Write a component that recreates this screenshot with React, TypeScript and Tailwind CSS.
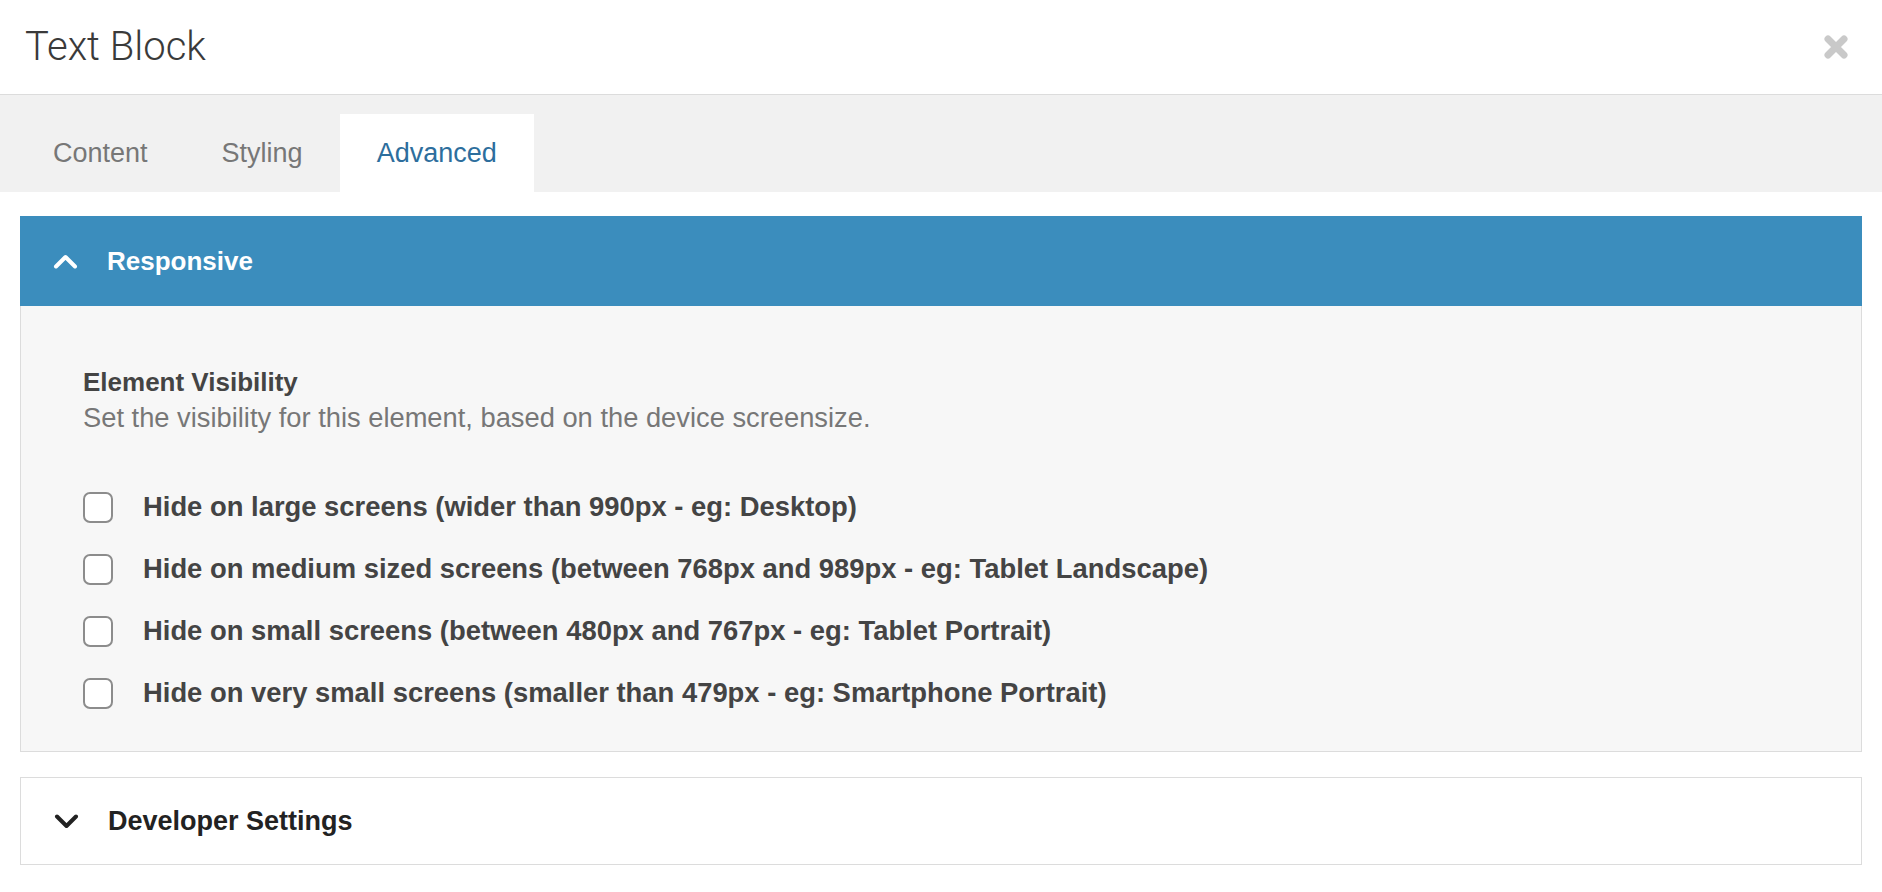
import { useState } from 'react'

const tabs = ['Content', 'Styling', 'Advanced']

const options = [
  'Hide on large screens (wider than 990px - eg: Desktop)',
  'Hide on medium sized screens (between 768px and 989px - eg: Tablet Landscape)',
  'Hide on small screens (between 480px and 767px - eg: Tablet Portrait)',
  'Hide on very small screens (smaller than 479px - eg: Smartphone Portrait)',
]

function Chevron({ up }: { up?: boolean }) {
  return (
    <svg width="25" height="15" viewBox="0 0 25 15" className="shrink-0">
      <polyline
        points={up ? '3,12.5 12.5,3 22,12.5' : '3,2.5 12.5,12 22,2.5'}
        fill="none"
        stroke="currentColor"
        strokeWidth="4"
        strokeLinecap="round"
        strokeLinejoin="round"
      />
    </svg>
  )
}

export default function App() {
  const [active, setActive] = useState('Advanced')
  const [checked, setChecked] = useState<boolean[]>([false, false, false, false])
  const [devOpen, setDevOpen] = useState(false)

  return (
    <div className="min-h-screen bg-white font-['Liberation_Sans',Arial,sans-serif]">
      <header className="h-[95px] flex items-center justify-between pl-[25px] pr-[33px] border-b border-[#dcdcdc]">
        <h1 className="font-['Roboto',sans-serif] font-light text-[40px] text-[#3a3a3a] leading-none">Text Block</h1>
        <button type="button" className="w-[26px] h-[26px] flex items-center justify-center">
          <svg width="26" height="26" viewBox="0 0 26 26">
            <path d="M5 5 L21 21 M21 5 L5 21" stroke="#c9c9c9" strokeWidth="7" strokeLinecap="round" />
          </svg>
        </button>
      </header>

      <nav className="h-[97px] bg-[#f1f1f1] flex items-end pl-[16px]">
        {tabs.map((t) => (
          <button
            key={t}
            type="button"
            onClick={() => setActive(t)}
            className={
              t === active
                ? 'h-[78px] px-[37px] bg-white text-[27px] text-[#2d6e9d]'
                : 'h-[78px] px-[37px] text-[27px] text-[#777]'
            }
          >
            {t}
          </button>
        ))}
      </nav>

      <main className="px-[20px] pt-[24px]">
        <section>
          <div className="h-[90px] bg-[#3b8dbd] flex items-center pl-[33px] gap-[29px] text-white">
            <Chevron up />
            <span className="text-[26px] font-bold">Responsive</span>
          </div>
          <div className="bg-[#f7f7f7] border border-t-0 border-[#dcdcdc] pl-[62px] pt-[58px] pb-[27px]">
            <h3 className="text-[26px] leading-[36px] font-bold text-[#444]">Element Visibility</h3>
            <p className="text-[27.3px] leading-[36px] text-[#777]">
              Set the visibility for this element, based on the device screensize.
            </p>
            <div className="mt-[40px] flex flex-col">
              {options.map((o, i) => (
                <label key={o} className="h-[62px] flex items-center gap-[30px] cursor-pointer">
                  <input
                    type="checkbox"
                    checked={checked[i]}
                    onChange={() => setChecked(checked.map((c, j) => (j === i ? !c : c)))}
                    className="appearance-none w-[30px] h-[31px] rounded-[7px] border-2 border-[#8c8c8c] bg-white checked:bg-[#3b8dbd] checked:border-[#3b8dbd] shrink-0"
                  />
                  <span className="text-[27.4px] font-bold text-[#444]">{o}</span>
                </label>
              ))}
            </div>
          </div>
        </section>

        <section className="mt-[25px] border border-[#dcdcdc] bg-white">
          <button
            type="button"
            onClick={() => setDevOpen(!devOpen)}
            className="h-[86px] w-full flex items-center pl-[33px] gap-[29px] text-[#222]"
          >
            <Chevron up={devOpen} />
            <span className="text-[27px] font-bold">Developer Settings</span>
          </button>
        </section>
      </main>
    </div>
  )
}
